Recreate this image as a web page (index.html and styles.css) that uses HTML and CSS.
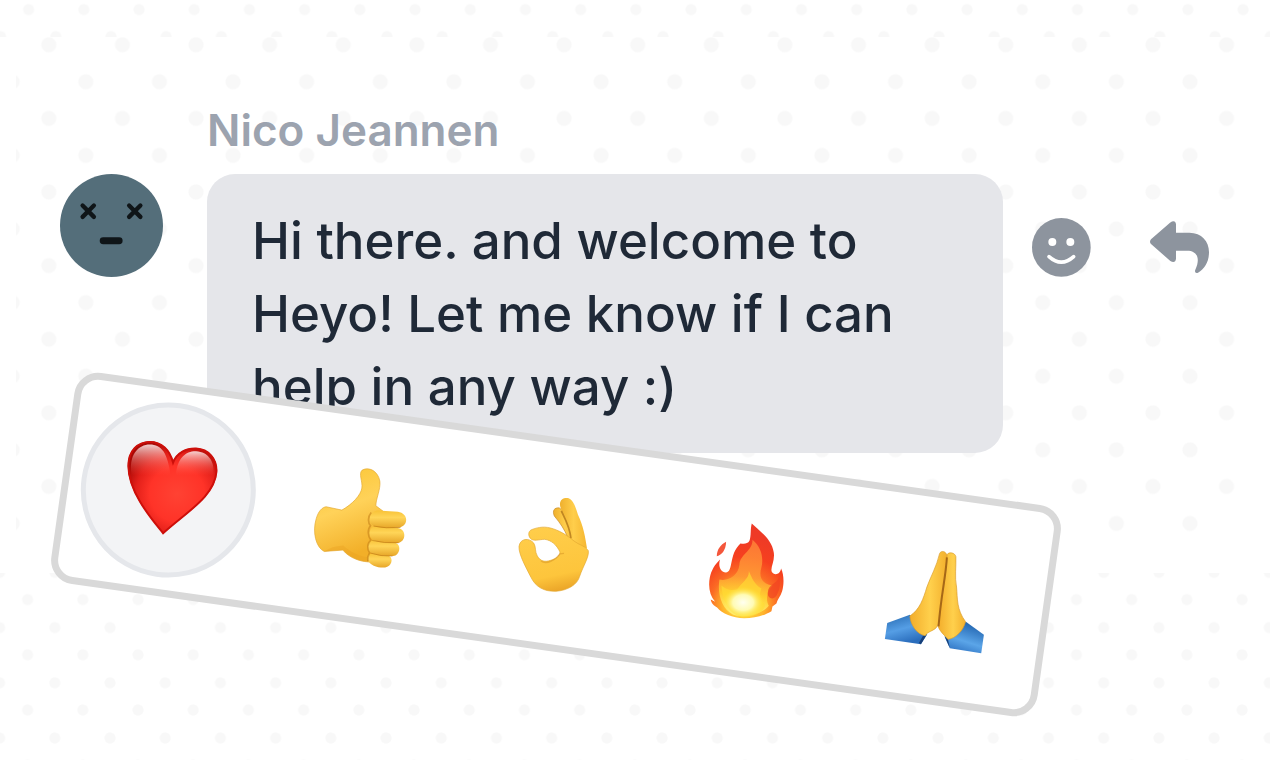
FILE: index.html
```html
<!DOCTYPE html>
<html lang="en">
<head>
  <meta charset="UTF-8">
  <title>Heyo - Reactions</title>
  <meta name="viewport" content="width=device-width, initial-scale=1.0">
  <link rel="stylesheet" href="styles.css">
</head>
<body>

  <div class="dots dots-top"></div>

  <main class="chat">
    <p class="author">Nico Jeannen</p>
    <div class="message-row">
      <svg class="avatar" viewBox="0 0 310 310" role="img" aria-label="Nico Jeannen">
        <circle cx="155" cy="155" r="155" fill="#546e7a"/>
        <g stroke="#0f1518" stroke-width="13" stroke-linecap="round" fill="none">
          <path d="M68 95 L102 129 M102 95 L68 129"/>
          <path d="M208 95 L242 129 M242 95 L208 129"/>
          <path d="M130 201 H178" stroke-width="21"/>
        </g>
      </svg>

      <div class="bubble">Hi there. and welcome to Heyo! Let me know if I can help in any way :)</div>

      <div class="actions">
        <button class="action" aria-label="Add reaction">
          <svg viewBox="0 0 177 177">
            <circle cx="88" cy="88" r="88" fill="#8d949e"/>
            <circle cx="61" cy="72" r="12" fill="#fff"/>
            <circle cx="115" cy="72" r="12" fill="#fff"/>
            <path d="M51 116 Q88 149 125 116" fill="none" stroke="#fff" stroke-width="11" stroke-linecap="round"/>
          </svg>
        </button>
        <button class="action" aria-label="Reply">
          <svg viewBox="0 -10 177 177">
            <path d="M3 54 L60 4 Q76 -6 78 9 V34 H118 C155 34 177 60 177 92 C177 122 164 142 144 154 C137 158 133 151 136 145 C152 111 141 88 112 88 H78 V112 Q76 127 61 119 L3 68 Q-3 61 3 54 Z" fill="#8d949e"/>
          </svg>
        </button>
      </div>
    </div>
  </main>

  <div class="dots dots-bottom"></div>

  <div class="reactions">
    <button class="reaction selected" aria-label="Love">
      <svg viewBox="205 210 360 360">
        <defs>
          <radialGradient id="heart-fill" gradientUnits="userSpaceOnUse" cx="410" cy="400" r="165">
            <stop offset="0" stop-color="#ff4233"/>
            <stop offset="0.5" stop-color="#ff3328"/>
            <stop offset="0.75" stop-color="#e3201a"/>
            <stop offset="1" stop-color="#a80805"/>
          </radialGradient>
          <linearGradient id="heart-shine" x1="0" y1="0" x2="0" y2="1">
            <stop offset="0" stop-color="#fff" stop-opacity="0.8"/>
            <stop offset="1" stop-color="#ff5a4c" stop-opacity="0"/>
          </linearGradient>
        </defs>
        <g transform="rotate(-8 385 390)">
          <path d="M368 520 C345 488 262 400 262 316 C262 270 292 242 328 242 C364 242 388 266 398 301 C410 274 438 261 467 262 C505 264 533 295 530 334 C524 408 440 455 368 520 Z" fill="url(#heart-fill)"/>
          <path d="M368 518 C345 488 264 400 264 316 C264 270 292 244 328 244 C364 244 388 268 398 306 C410 276 438 263 467 264 C505 266 530 295 528 334 C522 408 440 453 368 518 Z" fill="none" stroke="#cd0f0a" stroke-width="6"/>
          <path d="M274 345 C262 283 295 252 328 252 C364 252 382 278 390 345 Z" fill="url(#heart-shine)"/>
          <path d="M406 345 C410 290 438 271 467 272 C503 274 525 303 518 345 Z" fill="url(#heart-shine)"/>
        </g>
      </svg>
    </button>

    <button class="reaction" aria-label="Thumbs up">
      <svg viewBox="-2 6 360 360">
        <defs>
          <linearGradient id="skin" x1="0" y1="0" x2="0.3" y2="1">
            <stop offset="0" stop-color="#fac42f"/>
            <stop offset="0.5" stop-color="#ffd259"/>
            <stop offset="1" stop-color="#f2af28"/>
          </linearGradient>
          <linearGradient id="finger" x1="0" y1="0" x2="0" y2="1">
            <stop offset="0" stop-color="#f8c237"/>
            <stop offset="0.4" stop-color="#ffd558"/>
            <stop offset="1" stop-color="#e7a628"/>
          </linearGradient>
        </defs>
        <g transform="rotate(-8 178 186)">
          <path d="M77 154 L124 164 C155 147 181 119 184 98 C187 78 173 55 185 44 C205 33 232 46 238 77 C241 101 226 130 226 151 L250 169 L220 320 C180 321 146 307 127 284 L71 288 C46 276 35 230 47 190 C53 168 65 155 77 154 Z" fill="url(#skin)" stroke="#e3a830" stroke-width="2"/>
          <path d="M71 288 L127 284 C147 306 176 320 203 320 L206 306 C174 302 151 290 128 270 Q94 272 71 288 Z" fill="#e79d20" opacity="0.35"/>
          <path d="M217 294 L266 302 C280 311 272 334 254 336 C235 338 207 331 202 312 C200 300 206 294 217 294 Z" fill="url(#finger)"/>
          <path d="M220 252 L284 262 C304 268 298 300 278 302 C251 302 220 300 208 291 C196 278 204 253 220 252 Z" fill="url(#finger)"/>
          <path d="M226 211 L292 218 C319 222 317 260 292 263 C263 262 232 263 217 253 C199 241 207 213 226 211 Z" fill="url(#finger)"/>
          <path d="M231 165 L292 169 C325 174 324 211 297 216 C268 218 234 220 219 211 C199 200 207 167 231 165 Z" fill="url(#finger)"/>
          <path d="M219 212 Q255 220 300 216 M215 255 Q250 264 294 262 M210 293 Q240 303 276 302" fill="none" stroke="#bd7814" stroke-width="3" opacity="0.6"/>
          <path d="M212 171 C200 185 203 204 210 211 C200 222 202 243 211 254 C199 264 200 282 207 292 Q200 304 202 317" fill="none" stroke="#bd7814" stroke-width="5" opacity="0.5"/>
        </g>
      </svg>
    </button>

    <button class="reaction" aria-label="OK">
      <svg viewBox="-43 -4 360 360">
        <defs>
          <linearGradient id="palm" gradientUnits="userSpaceOnUse" x1="110" y1="130" x2="150" y2="318">
            <stop offset="0" stop-color="#ffcd4a"/>
            <stop offset="0.75" stop-color="#fdc53c"/>
            <stop offset="1" stop-color="#eba528"/>
          </linearGradient>
          <linearGradient id="ok-finger" x1="0" y1="0" x2="1" y2="0">
            <stop offset="0" stop-color="#efb02e"/>
            <stop offset="0.5" stop-color="#ffce4b"/>
            <stop offset="1" stop-color="#f5b631"/>
          </linearGradient>
        </defs>
        <g transform="rotate(-8 137 176)">
          <path d="M147 91 C140 74 148 65 162 67 C175 73 188 104 200 130 L214 190 L187 155 C178 132 166 114 147 91 Z" fill="url(#ok-finger)" stroke="#c78822" stroke-width="2"/>
          <path d="M165 63 C160 43 175 35 190 38 C205 44 211 66 218 87 C233 118 240 153 245 188 L210 180 L195 156 C190 122 175 93 165 63 Z" fill="url(#ok-finger)"/>
          <path d="M168 76 C178 97 193 122 197 158" fill="none" stroke="#a76c16" stroke-width="5" opacity="0.7"/>
          <path d="M77 133 C91 127 112 121 135 127 C162 134 184 148 206 166 C220 178 240 180 249 195 C252 214 233 242 223 272 C216 298 187 314 152 317 C116 318 91 304 77 275 C64 249 40 207 41 183 C44 157 72 156 85 172 C93 184 88 198 96 211 C105 227 119 230 136 224 C151 220 164 211 164 199 C154 178 139 164 118 161 C103 161 84 169 75 158 C68 149 69 138 77 133 Z" fill="url(#palm)" stroke="#e3a830" stroke-width="2"/>
          <path d="M107 226 C123 238 150 224 164 205 L176 203" fill="none" stroke="#d18c1e" stroke-width="4" opacity="0.45"/>
        </g>
      </svg>
    </button>

    <button class="reaction" aria-label="Fire">
      <svg viewBox="-40 2 360 360">
        <defs>
          <radialGradient id="flame" gradientUnits="userSpaceOnUse" cx="145" cy="285" r="210">
            <stop offset="0" stop-color="#ffe64a"/>
            <stop offset="0.3" stop-color="#ffb42b"/>
            <stop offset="0.48" stop-color="#fb6b24"/>
            <stop offset="0.7" stop-color="#f6401f"/>
            <stop offset="1" stop-color="#ee3a26"/>
          </radialGradient>
          <linearGradient id="flame-inner" gradientUnits="userSpaceOnUse" x1="170" y1="90" x2="145" y2="310">
            <stop offset="0" stop-color="#ff8038"/>
            <stop offset="0.5" stop-color="#ff9d35"/>
            <stop offset="0.75" stop-color="#ffd531"/>
            <stop offset="1" stop-color="#fff27a"/>
          </linearGradient>
          <radialGradient id="flame-core">
            <stop offset="0" stop-color="#fffff0"/>
            <stop offset="0.5" stop-color="#fffbb5"/>
            <stop offset="1" stop-color="#ffe63a" stop-opacity="0"/>
          </radialGradient>
        </defs>
        <g transform="rotate(-8 140 182)">
          <path d="M92 94 C75 102 64 119 64 137 C77 136 92 119 92 94 Z" fill="#f4563b"/>
          <path d="M169 39 C191 61 229 84 235 126 C239 151 224 170 229 184 C235 195 254 194 257 174 C266 193 266 222 260 242 C256 256 245 268 243 279 L231 288 L228 302 C207 315 178 323 146 323 C111 323 80 309 65 291 C56 286 47 278 46 267 L59 274 C43 255 38 229 43 202 C47 180 58 162 74 147 C67 166 76 186 91 186 C115 185 99 132 135 99 C145 101 157 101 162 91 C168 76 164 56 169 39 Z" fill="url(#flame)"/>
          <path d="M171 88 C173 121 133 132 132 163 C129 194 98 214 72 207 C65 251 79 295 112 312 C149 326 202 309 220 286 C208 264 218 238 232 225 C196 219 190 197 198 170 C205 143 198 110 171 88 Z" fill="url(#flame-inner)" opacity="0.85"/>
          <path d="M160 181 C163 204 135 219 126 236 C108 243 89 235 78 225 C82 279 105 315 145 320 C190 318 214 295 207 278 C192 270 192 248 198 234 C178 223 170 205 160 181 Z" fill="#ffdc34" opacity="0.65"/>
          <ellipse cx="143" cy="276" rx="62" ry="47" fill="url(#flame-core)"/>
          <path d="M252 197 C244 223 218 219 217 246 C215 265 238 272 246 250 Q257 228 252 197 Z" fill="#f24622" opacity="0.75"/>
        </g>
      </svg>
    </button>

    <button class="reaction" aria-label="Thanks">
      <svg viewBox="8 7 360 360">
        <defs>
          <linearGradient id="sleeve-left" x1="0" y1="0" x2="0.4" y2="1">
            <stop offset="0" stop-color="#2467ae"/>
            <stop offset="0.55" stop-color="#559ee5"/>
            <stop offset="1" stop-color="#2a6dbc"/>
          </linearGradient>
          <linearGradient id="sleeve-right" x1="0.7" y1="0" x2="0.3" y2="1">
            <stop offset="0" stop-color="#1c5eaa"/>
            <stop offset="0.6" stop-color="#5ba5e8"/>
            <stop offset="1" stop-color="#2c70c0"/>
          </linearGradient>
          <linearGradient id="hand" x1="0" y1="0" x2="1" y2="0">
            <stop offset="0" stop-color="#f3ad2b"/>
            <stop offset="0.55" stop-color="#ffd04c"/>
            <stop offset="1" stop-color="#f3b02d"/>
          </linearGradient>
        </defs>
        <g transform="rotate(-8 188 187)">
          <path d="M50 262 L118 237 L170 296 L151 326 L43 310 Z" fill="url(#sleeve-left)"/>
          <path d="M286 258 L340 297 L332 353 L238 338 L222 303 Z" fill="url(#sleeve-right)"/>
          <path d="M151 326 L168 298 L157 301 L145 322 Z M238 338 L222 302 L232 310 Z" fill="#173f78"/>
          <path d="M229 57 C235 48 253 50 256 63 C257 92 252 125 258 154 C261 189 258 222 285 258 C278 285 256 308 232 311 C222 298 207 288 202 270 L214 160 Z" fill="url(#hand)" stroke="#d99b2b" stroke-width="2"/>
          <path d="M207 54 C211 43 227 46 229 60 C229 99 219 153 213 197 C208 228 209 263 197 276 C186 287 173 286 164 300 C139 297 119 266 118 241 C148 221 158 190 169 154 C181 121 198 93 207 54 Z" fill="url(#hand)" stroke="#d99b2b" stroke-width="2"/>
          <path d="M229 65 C226 121 211 181 204 272" fill="none" stroke="#9a5c13" stroke-width="6" opacity="0.85"/>
        </g>
      </svg>
    </button>
  </div>

</body>
</html>
```

FILE: styles.css
```css
* {
  box-sizing: border-box;
}

body {
  margin: 0;
  min-height: 100vh;
  position: relative;
  overflow: hidden;
  display: flex;
  flex-direction: column;
  font-family: Inter, "Liberation Sans", sans-serif;
  background: #fff;
}

.dots {
  --dot: radial-gradient(circle, #f8f8f8 5px, transparent 6px);
  background-image: var(--dot), var(--dot);
  background-size: calc(100vw / 23) calc(100vw / 23);
}

.dots-top {
  height: 37px;
  background-position: 1px -18px, -27px 9px;
}

.dots-bottom {
  flex: 1;
  min-height: 187px;
  background-position: 0 -1px, -28px 27px;
}

.chat {
  --dot: radial-gradient(circle, #f8f8f8 7px, transparent 8px);
  min-height: 536px;
  margin: 0 16px;
  padding: 66px 45px 0 44px;
  border-bottom: 28px solid #fff;
  background-image: var(--dot), var(--dot);
  background-size: calc(100vw * 4 / 69) calc(100vw * 4 / 69);
  background-position: -4px -29px, 33px 8px;
}

.author {
  margin: 0 0 17px 147px;
  font-size: 44px;
  line-height: 54px;
  font-weight: 600;
  color: #9ca3af;
}

.message-row {
  display: flex;
  align-items: flex-start;
}

.avatar {
  flex: none;
  width: 103px;
  height: 103px;
  margin-right: 44px;
}

.bubble {
  flex: 1;
  padding: 30px 45px;
  border-radius: 28px;
  background: #e5e6ea;
  color: #1f2937;
  font-size: 51px;
  line-height: 73px;
  font-weight: 500;
}

.actions {
  display: flex;
  gap: 59px;
  padding: 44px 0 0 29px;
}

button {
  padding: 0;
  border: none;
  background: none;
  cursor: pointer;
}

.action svg {
  display: block;
  width: 59px;
  height: 59px;
}

/* tilted picker over the message */
.reactions {
  position: absolute;
  left: 58px;
  top: 438px;
  display: flex;
  gap: 18px;
  padding: 12px 23px 12px 12px;
  border: 7px solid #d9d9d9;
  border-radius: 24px;
  background: #fff;
  transform: rotate(8deg);
}

.reaction {
  display: flex;
  align-items: center;
  justify-content: center;
  width: 175px;
  height: 175px;
  border-radius: 50%;
}

.reaction svg {
  width: 120px;
  height: 120px;
  overflow: visible;
}

.selected {
  border: 5px solid #e5e7eb;
  background: #f3f4f6;
}
```
